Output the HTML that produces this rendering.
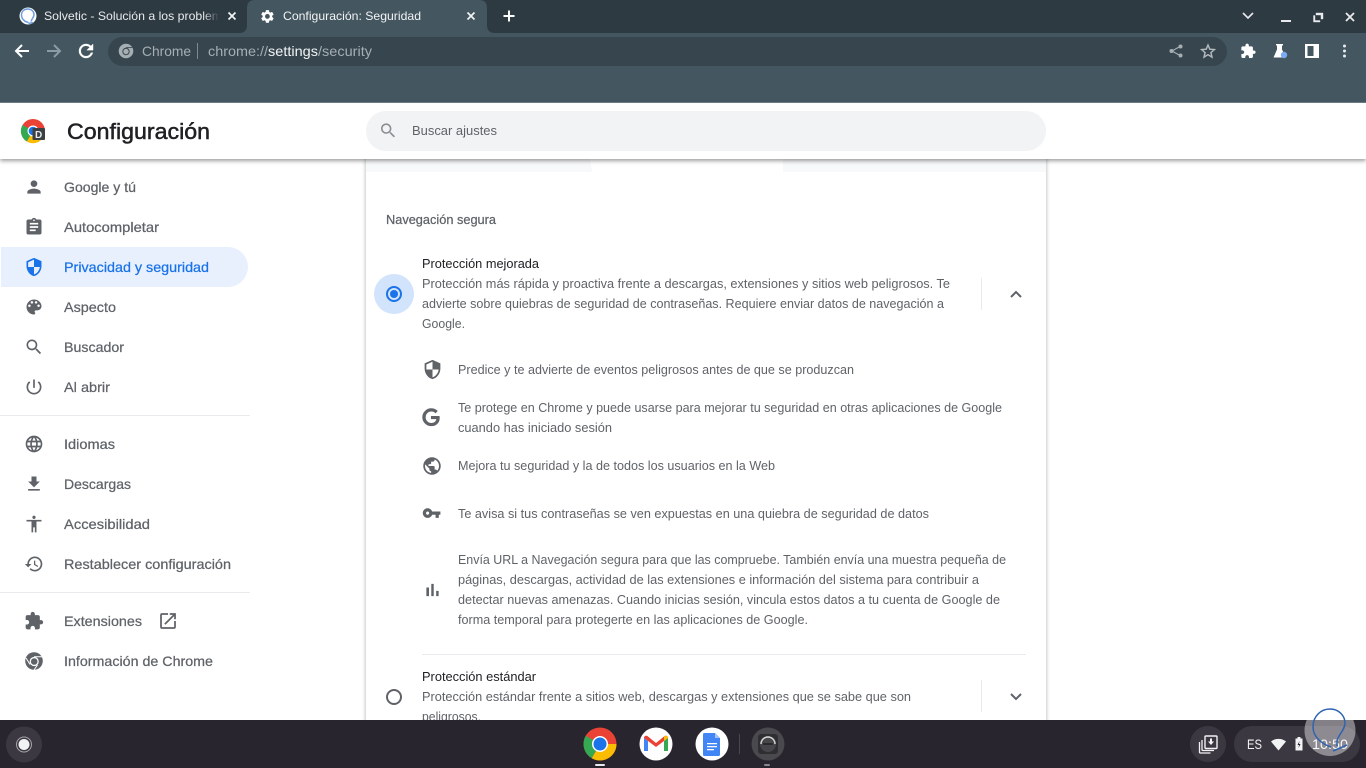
<!DOCTYPE html>
<html lang="es"><head><meta charset="utf-8"><title>Configuración: Seguridad</title>
<style>
html,body{margin:0;padding:0;width:1366px;height:768px;overflow:hidden;background:#fff}
.a{position:absolute}
svg{position:absolute;left:0;top:0}
text{font-family:"Liberation Sans",sans-serif;white-space:pre}
.nav{font-size:14px;fill:#5f6368;stroke:#5f6368;stroke-width:.25}
.b{font-size:13px;fill:#5f6368}
.t{font-size:13px;fill:#202124}
.i{fill:#5f6368}
</style></head><body>
<div class="a" style="left:366px;top:150px;width:680px;height:580px;background:#fff;box-shadow:0 0 3px 1px rgba(60,64,67,.28)"></div>
<div class="a" style="left:366px;top:159px;width:680px;height:13px;background:#f8f9fa;clip-path:polygon(0 0,224px 0,226px 100%,0 100%)"></div>
<div class="a" style="left:783px;top:159px;width:263px;height:13px;background:#f8f9fa"></div>
<div class="a" style="left:0;top:103px;width:1366px;height:56px;background:#fff;box-shadow:0 2px 4px rgba(0,0,0,.38)"></div>
<svg width="1366" height="768" viewBox="0 0 1366 768" xmlns="http://www.w3.org/2000/svg">
<defs><linearGradient id="fd" x1="0" x2="1" y1="0" y2="0"><stop offset="0" stop-color="#2e3a41" stop-opacity="0"/><stop offset="1" stop-color="#2e3a41"/></linearGradient></defs>
<!-- chrome frame -->
<rect width="1366" height="33" fill="#2e3a41"/>
<rect y="33" width="1366" height="69" fill="#44565f"/>
<rect y="102" width="1366" height="1" fill="#6b7b84"/>
<path d="M239 33q8 0 8-8V8q0-8 8-8h224q8 0 8 8v17q0 8 8 8z" fill="#44565f"/>
<rect x="108" y="37" width="1119" height="29" rx="14.5" fill="#37464e"/>
<!-- tab 1 -->
<circle cx="28" cy="16" r="8.500" fill="#fff"/>
<path d="M28.500 22.500C24 21.500 21.500 18.500 21.500 15C21.500 11 24.500 9 27.500 9C31.500 9 34 11.500 34 14.500C34 17.500 31.500 19 31 21.500M28.500 23.500L33 22.500" fill="none" stroke="#6f9fe0" stroke-width="1.500"/>
<svg x="0" y="0" width="219" height="33"><text x="44" y="20" font-size="12" fill="#e8eaed" textLength="178" lengthAdjust="spacingAndGlyphs">Solvetic - Solución a los problem</text></svg>
<rect x="203" y="8" width="16" height="18" fill="url(#fd)"/>
<path d="M228.500 12.500l7 7m0-7l-7 7" stroke="#f1f3f4" stroke-width="1.700" fill="none"/>
<!-- tab 2 -->
<g transform="translate(259.500 8.500) scale(.66)"><path fill="#fff" d="M19.140 12.940c.04-.3.06-.61.06-.94 0-.32-.02-.64-.07-.94l2.030-1.580c.18-.14.23-.41.12-.61l-1.920-3.320c-.12-.22-.37-.29-.59-.22l-2.390.96c-.5-.38-1.030-.7-1.620-.94l-.36-2.540c-.04-.24-.24-.41-.48-.41h-3.840c-.24 0-.43.17-.47.41l-.36 2.540c-.59.24-1.130.57-1.620.94l-2.390-.96c-.22-.08-.47 0-.59.22L2.740 8.870c-.12.21-.08.47.12.61l2.030 1.580c-.05.3-.09.63-.09.94s.02.64.07.94l-2.030 1.580c-.18.14-.23.41-.12.61l1.920 3.320c.12.22.37.29.59.22l2.390-.96c.5.38 1.030.7 1.620.94l.36 2.540c.05.24.24.41.48.41h3.840c.24 0 .44-.17.47-.41l.36-2.540c.59-.24 1.130-.56 1.620-.94l2.390.96c.22.08.47 0 .59-.22l1.920-3.320c.12-.22.07-.47-.12-.61l-2.010-1.580zM12 15.600c-1.980 0-3.600-1.620-3.600-3.600s1.620-3.600 3.600-3.600 3.600 1.620 3.600 3.600-1.620 3.600-3.600 3.600z"/></g>
<text x="283" y="20" font-size="12" fill="#f1f3f4" textLength="138" lengthAdjust="spacingAndGlyphs">Configuración: Seguridad</text>
<path d="M467.500 12.500l7 7m0-7l-7 7" stroke="#f1f3f4" stroke-width="1.700" fill="none"/>
<path d="M509 10.500v11M503.500 16h11" stroke="#fff" stroke-width="2" fill="none"/>
<!-- window controls -->
<path d="M1243 13l5 5 5-5" stroke="#e8eaed" stroke-width="1.600" fill="none"/>
<rect x="1281" y="20" width="10" height="2" fill="#e8eaed"/>
<path d="M1316 13h7v6h-2v-4h-5zM1313.500 15.500h1.500v5h5v1.500h-6.500z" fill="#e8eaed" stroke="#e8eaed" stroke-width=".4"/>
<path d="M1346 13l8 8m0-8l-8 8" stroke="#e8eaed" stroke-width="1.800" fill="none"/>
<!-- toolbar -->
<path d="M29 51H16.500M22 45l-6 6 6 6" stroke="#fff" stroke-width="2" fill="none"/>
<path d="M47 51h12.500M54 45l6 6-6 6" stroke="#8d9ba3" stroke-width="2" fill="none"/>
<g transform="translate(75.500 40.500) scale(.875)"><path fill="#fff" stroke="#fff" stroke-width=".5" d="M17.650 6.350C16.200 4.900 14.210 4 12 4c-4.420 0-7.990 3.580-7.990 8s3.570 8 7.990 8c3.730 0 6.840-2.550 7.730-6h-2.080c-.82 2.330-3.040 4-5.650 4-3.310 0-6-2.690-6-6s2.690-6 6-6c1.660 0 3.140.69 4.220 1.780L13 11h7V4l-2.350 2.350z"/></g>
<circle cx="126" cy="51" r="7.300" fill="#a5aeb3"/>
<circle cx="126" cy="51.500" r="3.700" fill="#37464e"/>
<circle cx="126" cy="51.500" r="2.700" fill="#a5aeb3"/>
<path d="M126 47.500h6.500" stroke="#37464e" stroke-width=".8"/>
<text x="142" y="56" font-size="14" fill="#a5aeb3" textLength="49" lengthAdjust="spacingAndGlyphs">Chrome</text>
<rect x="197" y="43" width="1" height="16" fill="#7d8a91"/>
<text x="208" y="56" font-size="14" fill="#a5aeb3" textLength="60" lengthAdjust="spacingAndGlyphs">chrome://</text>
<text x="268" y="56" font-size="14" fill="#f1f3f4" textLength="50" lengthAdjust="spacingAndGlyphs">settings</text>
<text x="318" y="56" font-size="14" fill="#a5aeb3" textLength="54" lengthAdjust="spacingAndGlyphs">/security</text>
<path d="M1180 46.500l-8 4.500 8 4.500" stroke="#a5aeb3" stroke-width="1.200" fill="none"/>
<circle cx="1180.500" cy="46.500" r="2" fill="#a5aeb3"/><circle cx="1171.500" cy="51" r="2" fill="#a5aeb3"/><circle cx="1180.500" cy="55.500" r="2" fill="#a5aeb3"/>
<path d="M1208 45l1.800 4.200 4.600.4-3.500 3 1.100 4.500-4-2.400-4 2.400 1.100-4.500-3.500-3 4.600-.4z" fill="none" stroke="#b4bcc0" stroke-width="1.400"/>
<g transform="translate(1240 43) scale(.68)"><path fill="#fff" d="M20.500 11H19V7c0-1.100-.9-2-2-2h-4V3.500C13 2.120 11.880 1 10.500 1S8 2.120 8 3.500V5H4c-1.100 0-1.990.9-1.990 2v3.800H3.500c1.490 0 2.700 1.210 2.700 2.700s-1.210 2.700-2.700 2.700H2V20c0 1.100.9 2 2 2h3.800v-1.500c0-1.490 1.210-2.700 2.700-2.700 1.490 0 2.700 1.210 2.700 2.700V22H17c1.100 0 2-.9 2-2v-4h1.500c1.380 0 2.500-1.120 2.500-2.500S21.880 11 20.500 11z"/></g>
<path d="M1276 44h7v1.500h-1v4l4 8h-12.500l3.500-8v-4h-1z" fill="#fff"/>
<circle cx="1284" cy="55" r="3.200" fill="#7baaf7"/>
<path d="M1305 44h14v14h-14zM1307.500 46v10h6v-10z" fill="#fff" fill-rule="evenodd"/>
<circle cx="1344.500" cy="46" r="1.500" fill="#e8eaed"/><circle cx="1344.500" cy="51" r="1.500" fill="#e8eaed"/><circle cx="1344.500" cy="56" r="1.500" fill="#e8eaed"/>
<!-- header -->
<circle cx="33" cy="131" r="12" fill="#ea4335"/>
<path d="M33 131l-6.200 10.500A12 12 0 0 1 22.600 125z" fill="#34a853"/>
<path d="M33 131h12a12 12 0 0 1-18.200 10.500z" fill="#fbbc04"/>
<circle cx="33" cy="131" r="5.500" fill="#fff"/><circle cx="33" cy="131" r="4.300" fill="#1a73e8"/>
<rect x="32.500" y="128" width="12.500" height="12" rx="1" fill="#3c4043"/>
<text x="35" y="138" font-size="10" font-weight="bold" fill="#e8eaed">D</text>
<text x="67" y="139" font-size="22" fill="#202124" stroke="#202124" stroke-width=".5" textLength="143" lengthAdjust="spacingAndGlyphs">Configuración</text>
<rect x="366" y="111" width="680" height="40" rx="20" fill="#f1f3f4"/>
<g transform="translate(378.600 121)  scale(.8)"><path fill="#8a8e92" d="M15.500 14h-.79l-.28-.27C15.410 12.590 16 11.110 16 9.500 16 5.910 13.090 3 9.500 3S3 5.910 3 9.500 5.910 16 9.500 16c1.610 0 3.090-.59 4.230-1.570l.27.28v.79l5 4.990L20.490 19l-4.990-5zm-6 0C7.010 14 5 11.990 5 9.500S7.010 5 9.500 5 14 7.010 14 9.500 11.990 14 9.500 14z"/></g>
<text x="412" y="135" font-size="13" fill="#5f6368" textLength="85" lengthAdjust="spacingAndGlyphs">Buscar ajustes</text>
<!-- sidebar -->
<path d="M1 247h227a20 20 0 0 1 0 40H1z" fill="#e8f0fe"/>
<rect x="0" y="415" width="250" height="1" fill="#e8eaed"/>
<rect x="0" y="592" width="250" height="1" fill="#e8eaed"/>
<g class="i">
<path transform="translate(24 177) scale(.833)" d="M12 12c2.210 0 4-1.790 4-4s-1.790-4-4-4-4 1.790-4 4 1.790 4 4 4zm0 2c-2.670 0-8 1.340-8 4v2h16v-2c0-2.660-5.330-4-8-4z"/>
<path transform="translate(24 217) scale(.833)" d="M19 3h-4.180C14.400 1.840 13.300 1 12 1c-1.300 0-2.400.84-2.820 2H5c-1.100 0-2 .9-2 2v14c0 1.100.9 2 2 2h14c1.100 0 2-.9 2-2V5c0-1.100-.9-2-2-2zm-7 0c.55 0 1 .45 1 1s-.45 1-1 1-1-.45-1-1 .45-1 1-1zm2 14H7v-2h7v2zm3-4H7v-2h10v2zm0-4H7V7h10v2z"/>
<path transform="translate(24 257) scale(.833)" fill="#1a73e8" d="M12 1L3 5v6c0 5.550 3.840 10.740 9 12 5.160-1.260 9-6.450 9-12V5l-9-4zm0 10.990h7c-.53 4.120-3.280 7.790-7 8.940V12H5V6.300l7-3.110v8.800z"/>
<path transform="translate(24 297) scale(.833)" d="M12 3c-4.970 0-9 4.030-9 9s4.030 9 9 9c.83 0 1.500-.67 1.500-1.500 0-.39-.15-.74-.39-1.010-.23-.26-.38-.61-.38-.99 0-.83.67-1.500 1.500-1.500H16c2.760 0 5-2.240 5-5 0-4.420-4.030-8-9-8zm-5.500 9c-.83 0-1.500-.67-1.500-1.500S5.670 9 6.500 9 8 9.670 8 10.500 7.330 12 6.500 12zm3-4C8.670 8 8 7.330 8 6.500S8.670 5 9.500 5s1.500.67 1.500 1.500S10.330 8 9.500 8zm5 0c-.83 0-1.500-.67-1.500-1.500S13.670 5 14.500 5s1.500.67 1.500 1.500S15.330 8 14.500 8zm3 4c-.83 0-1.500-.67-1.500-1.500S16.670 9 17.500 9s1.500.67 1.500 1.500-.67 1.500-1.500 1.500z"/>
<path transform="translate(24 337) scale(.833)" d="M15.500 14h-.79l-.28-.27C15.410 12.590 16 11.110 16 9.500 16 5.910 13.090 3 9.500 3S3 5.910 3 9.500 5.910 16 9.500 16c1.610 0 3.090-.59 4.230-1.570l.27.28v.79l5 4.990L20.490 19l-4.990-5zm-6 0C7.010 14 5 11.990 5 9.500S7.010 5 9.500 5 14 7.010 14 9.500 11.990 14 9.500 14z"/>
<path transform="translate(24 377) scale(.833)" d="M13 3h-2v10h2V3zm4.830 2.170l-1.420 1.420C17.990 7.860 19 9.810 19 12c0 3.870-3.130 7-7 7s-7-3.130-7-7c0-2.190 1.010-4.140 2.580-5.420L6.170 5.170C4.230 6.820 3 9.260 3 12c0 4.970 4.030 9 9 9s9-4.030 9-9c0-2.740-1.230-5.180-3.170-6.830z"/>
<path transform="translate(24 434) scale(.833)" d="M11.990 2C6.470 2 2 6.480 2 12s4.470 10 9.990 10C17.520 22 22 17.520 22 12S17.520 2 11.990 2zm6.930 6h-2.950c-.32-1.250-.78-2.450-1.380-3.560 1.840.63 3.370 1.910 4.330 3.560zM12 4.040c.83 1.200 1.480 2.530 1.910 3.960h-3.820c.43-1.430 1.080-2.760 1.910-3.960zM4.260 14C4.100 13.360 4 12.690 4 12s.1-1.360.26-2h3.380c-.08.66-.14 1.320-.14 2 0 .68.06 1.340.14 2H4.260zm.82 2h2.950c.32 1.250.78 2.450 1.380 3.560-1.840-.63-3.370-1.900-4.330-3.560zm2.950-8H5.080c.96-1.660 2.490-2.930 4.330-3.560C8.810 5.550 8.350 6.750 8.030 8zM12 19.960c-.83-1.200-1.480-2.530-1.910-3.960h3.820c-.43 1.430-1.080 2.760-1.910 3.960zM14.340 14H9.660c-.09-.66-.16-1.320-.16-2 0-.68.07-1.350.16-2h4.680c.09.65.16 1.320.16 2 0 .68-.07 1.340-.16 2zm.25 5.560c.6-1.110 1.060-2.310 1.380-3.560h2.950c-.96 1.650-2.490 2.930-4.330 3.560zM16.360 14c.08-.66.14-1.320.14-2 0-.68-.06-1.340-.14-2h3.380c.16.64.26 1.310.26 2s-.1 1.360-.26 2h-3.380z"/>
<path transform="translate(24 474) scale(.833)" d="M19 9h-4V3H9v6H5l7 7 7-7zM5 18v2h14v-2H5z"/>
<path transform="translate(24 514) scale(.833)" d="M12 2c1.100 0 2 .9 2 2s-.9 2-2 2-2-.9-2-2 .9-2 2-2zm9 7h-6v13h-2v-6h-2v6H9V9H3V7h18v2z"/>
<path transform="translate(24 554) scale(.833)" d="M13 3c-4.970 0-9 4.030-9 9H1l3.890 3.890.07.14L9 12H6c0-3.870 3.130-7 7-7s7 3.130 7 7-3.130 7-7 7c-1.930 0-3.680-.79-4.940-2.060l-1.420 1.420C8.270 19.990 10.510 21 13 21c4.970 0 9-4.030 9-9s-4.030-9-9-9zm-1 5v5l4.280 2.540.72-1.210-3.500-2.080V8H12z"/>
<path transform="translate(24 611) scale(.833)" d="M20.500 11H19V7c0-1.100-.9-2-2-2h-4V3.500C13 2.120 11.880 1 10.500 1S8 2.120 8 3.500V5H4c-1.100 0-1.990.9-1.990 2v3.800H3.500c1.490 0 2.700 1.210 2.700 2.700s-1.210 2.700-2.700 2.700H2V20c0 1.100.9 2 2 2h3.800v-1.500c0-1.490 1.210-2.700 2.700-2.700 1.490 0 2.700 1.210 2.700 2.700V22H17c1.100 0 2-.9 2-2v-4h1.500c1.380 0 2.500-1.120 2.500-2.500S21.880 11 20.500 11z"/>
<path transform="translate(157.500 610.500) scale(.875)" d="M19 19H5V5h7V3H5c-1.110 0-2 .9-2 2v14c0 1.100.89 2 2 2h14c1.100 0 2-.9 2-2v-7h-2v7zM14 3v2h3.590l-9.830 9.830 1.410 1.410L19 6.410V10h2V3h-7z"/>
<circle cx="34" cy="661" r="8.800"/>
</g>
<circle cx="34.200" cy="661.500" r="4.600" fill="#fff"/>
<circle cx="34.200" cy="661.500" r="3.300" fill="#5f6368"/>
<path d="M34 656.800h8M30 664.500l-4-6.500M37.500 665l-3.500 5" stroke="#fff" stroke-width="1" fill="none"/>
<text class="nav" x="64" y="192" textLength="72" lengthAdjust="spacingAndGlyphs">Google y tú</text>
<text class="nav" x="64" y="232" textLength="95" lengthAdjust="spacingAndGlyphs">Autocompletar</text>
<text class="nav" x="64" y="272" style="fill:#1a73e8;stroke:#1a73e8" textLength="145" lengthAdjust="spacingAndGlyphs">Privacidad y seguridad</text>
<text class="nav" x="64" y="312" textLength="52" lengthAdjust="spacingAndGlyphs">Aspecto</text>
<text class="nav" x="64" y="352" textLength="60" lengthAdjust="spacingAndGlyphs">Buscador</text>
<text class="nav" x="64" y="392" textLength="46" lengthAdjust="spacingAndGlyphs">Al abrir</text>
<text class="nav" x="64" y="449" textLength="51" lengthAdjust="spacingAndGlyphs">Idiomas</text>
<text class="nav" x="64" y="489" textLength="67" lengthAdjust="spacingAndGlyphs">Descargas</text>
<text class="nav" x="64" y="529" textLength="86" lengthAdjust="spacingAndGlyphs">Accesibilidad</text>
<text class="nav" x="64" y="569" textLength="167" lengthAdjust="spacingAndGlyphs">Restablecer configuración</text>
<text class="nav" x="64" y="626" textLength="78" lengthAdjust="spacingAndGlyphs">Extensiones</text>
<text class="nav" x="64" y="666" textLength="149" lengthAdjust="spacingAndGlyphs">Información de Chrome</text>
<!-- main -->
<text x="386" y="224" font-size="13" fill="#5f6368" stroke="#5f6368" stroke-width=".25" textLength="110" lengthAdjust="spacingAndGlyphs">Navegación segura</text>
<circle cx="394" cy="294" r="20" fill="#d2e3fc"/>
<circle cx="394" cy="294" r="7" fill="none" stroke="#1a73e8" stroke-width="2"/>
<circle cx="394" cy="294" r="4" fill="#1a73e8"/>
<text class="t" x="422" y="268" textLength="117" lengthAdjust="spacingAndGlyphs">Protección mejorada</text>
<text class="b" x="422" y="288" textLength="528" lengthAdjust="spacingAndGlyphs">Protección más rápida y proactiva frente a descargas, extensiones y sitios web peligrosos. Te</text>
<text class="b" x="422" y="308" textLength="522" lengthAdjust="spacingAndGlyphs">advierte sobre quiebras de seguridad de contraseñas. Requiere enviar datos de navegación a</text>
<text class="b" x="422" y="328" textLength="43" lengthAdjust="spacingAndGlyphs">Google.</text>
<rect x="981" y="278" width="1" height="32" fill="#e8eaed"/>
<path d="M1011 297l5-5 5 5" fill="none" stroke="#5f6368" stroke-width="2"/>
<g class="i">
<path transform="translate(422 359) scale(.875)" d="M12 1L3 5v6c0 5.550 3.840 10.740 9 12 5.160-1.260 9-6.450 9-12V5l-9-4zm0 10.990h7c-.53 4.120-3.280 7.790-7 8.940V12H5V6.300l7-3.110v8.800z"/>
<path transform="translate(421 407) scale(.85)" stroke="#5f6368" stroke-width="1" d="M21.350 11.100h-9.170v2.730h6.510c-.33 3.810-3.500 5.440-6.500 5.440C8.360 19.270 5 16.250 5 12c0-4.100 3.200-7.270 7.200-7.270 3.090 0 4.900 1.970 4.900 1.970L19 4.720S16.560 2 12.100 2C6.420 2 2.030 6.800 2.030 12c0 5.050 4.130 10 10.220 10 5.350 0 9.250-3.670 9.250-9.090 0-1.150-.15-1.810-.15-1.810z"/>
<path transform="translate(421.500 455.500) scale(.875)" d="M12 2C6.480 2 2 6.480 2 12s4.480 10 10 10 10-4.480 10-10S17.520 2 12 2zm-1 17.930c-3.950-.49-7-3.850-7-7.930 0-.62.08-1.210.21-1.790L9 15v1c0 1.100.9 2 2 2v1.930zm6.900-2.540c-.26-.81-1-1.390-1.900-1.390h-1v-3c0-.55-.45-1-1-1H8v-2h2c.55 0 1-.45 1-1V7h2c1.100 0 2-.9 2-2v-.41c2.930 1.190 5 4.060 5 7.410 0 2.080-.8 3.970-2.100 5.390z"/>
<path transform="translate(422 503.500) scale(.8)" d="M12.650 10C11.830 7.670 9.610 6 7 6c-3.310 0-6 2.690-6 6s2.690 6 6 6c2.610 0 4.830-1.670 5.650-4H17v4h4v-4h2v-4H12.650zM7 14c-1.100 0-2-.9-2-2s.9-2 2-2 2 .9 2 2-.9 2-2 2z"/>
<path transform="translate(422 579.500) scale(.875)" d="M5 9.200h3V19H5zM10.600 5h2.800v14h-2.800zm5.600 8H19v6h-2.800z"/>
</g>
<text class="b" x="458" y="374" textLength="396" lengthAdjust="spacingAndGlyphs">Predice y te advierte de eventos peligrosos antes de que se produzcan</text>
<text class="b" x="458" y="412" textLength="544" lengthAdjust="spacingAndGlyphs">Te protege en Chrome y puede usarse para mejorar tu seguridad en otras aplicaciones de Google</text>
<text class="b" x="458" y="432" textLength="154" lengthAdjust="spacingAndGlyphs">cuando has iniciado sesión</text>
<text class="b" x="458" y="470" textLength="317" lengthAdjust="spacingAndGlyphs">Mejora tu seguridad y la de todos los usuarios en la Web</text>
<text class="b" x="458" y="518" textLength="471" lengthAdjust="spacingAndGlyphs">Te avisa si tus contraseñas se ven expuestas en una quiebra de seguridad de datos</text>
<text class="b" x="458" y="564" textLength="548" lengthAdjust="spacingAndGlyphs">Envía URL a Navegación segura para que las compruebe. También envía una muestra pequeña de</text>
<text class="b" x="458" y="584" textLength="521" lengthAdjust="spacingAndGlyphs">páginas, descargas, actividad de las extensiones e información del sistema para contribuir a</text>
<text class="b" x="458" y="604" textLength="542" lengthAdjust="spacingAndGlyphs">detectar nuevas amenazas. Cuando inicias sesión, vincula estos datos a tu cuenta de Google de</text>
<text class="b" x="458" y="624" textLength="350" lengthAdjust="spacingAndGlyphs">forma temporal para protegerte en las aplicaciones de Google.</text>
<rect x="422" y="654" width="604" height="1" fill="#e8eaed"/>
<circle cx="394" cy="697" r="7" fill="none" stroke="#5f6368" stroke-width="2"/>
<text class="t" x="422" y="681" textLength="114" lengthAdjust="spacingAndGlyphs">Protección estándar</text>
<text class="b" x="422" y="701" textLength="489" lengthAdjust="spacingAndGlyphs">Protección estándar frente a sitios web, descargas y extensiones que se sabe que son</text>
<text class="b" x="422" y="721" textLength="59" lengthAdjust="spacingAndGlyphs">peligrosos.</text>
<rect x="981" y="680" width="1" height="32" fill="#e8eaed"/>
<path d="M1011 694l5 5 5-5" fill="none" stroke="#5f6368" stroke-width="2"/>
<!-- shelf -->
<rect y="720" width="1366" height="48" fill="#29252f"/>
<circle cx="24" cy="744.500" r="18" fill="#3c3842"/>
<circle cx="24" cy="744.500" r="7.500" fill="none" stroke="#a8a6ac" stroke-width="1"/>
<circle cx="24" cy="744.500" r="5.500" fill="#f1f3f4"/>
<!-- chrome app -->
<circle cx="600" cy="744" r="16.500" fill="#ea4335"/>
<path d="M600 744l-8.250 14.290A16.500 16.500 0 0 1 585.700 735.750z" fill="#34a853"/>
<path d="M600 744h16.500a16.500 16.500 0 0 1-24.750 14.290z" fill="#fbbc04"/>
<circle cx="600" cy="744" r="8" fill="#fff"/><circle cx="600" cy="744" r="6.500" fill="#1a73e8"/>
<rect x="595" y="764" width="10" height="2" rx="1" fill="#e8eaed"/>
<!-- gmail -->
<circle cx="656" cy="744" r="16.500" fill="#fff"/>
<path d="M644 738v13h4v-10z" fill="#4285f4"/>
<path d="M664 741v10h4v-13z" fill="#34a853"/>
<path d="M644 738c0-2 2.500-3 4-1.500l8 6.500 8-6.500c1.500-1.500 4-.5 4 1.500l-4 3-8 6-8-6z" fill="#ea4335"/>
<path d="M664 736.500c1.500-1.500 4-.5 4 1.500l-4 3z" fill="#fbbc04"/>
<!-- docs -->
<circle cx="712" cy="744" r="16.500" fill="#fff"/>
<path d="M704.500 733h10.500l5 5v16.500a1.500 1.500 0 0 1-1.500 1.500h-14a1.500 1.500 0 0 1-1.500-1.500V734.500a1.500 1.500 0 0 1 1.500-1.500z" fill="#4285f4"/>
<path d="M715 733l5 5h-5z" fill="#a1c2fa"/>
<path d="M707 743h10v1.300h-10zM707 746h10v1.300h-10zM707 749h7v1.300h-7z" fill="#fff"/>
<rect x="739" y="734" width="1" height="20" fill="#4a4650"/>
<!-- teamviewer -->
<circle cx="768" cy="744" r="16.500" fill="#4a4a4e"/>
<rect x="758" y="734" width="20" height="20" rx="3" fill="#2f2f33"/>
<circle cx="768" cy="744" r="8" fill="#47474b"/>
<path d="M761 744a7 7 0 0 1 14 0" fill="none" stroke="#d8d8d8" stroke-width="1.400"/>
<path d="M763 744h10" stroke="#222" stroke-width="1.500"/>
<rect x="764" y="764" width="6" height="2" rx="1" fill="#8a8790"/>
<!-- tray -->
<circle cx="1208" cy="744" r="18" fill="#3c3842"/>
<rect x="1234" y="726" width="126" height="36" rx="18" fill="#3c3842"/>
<rect x="1205" y="736" width="12" height="12.500" rx="1" fill="none" stroke="#f1f3f4" stroke-width="1.400"/>
<path d="M1210 738.500h2v3h2l-3 3.500-3-3.500h2z" fill="#f1f3f4"/>
<path d="M1202 740v9.500a1 1 0 0 0 1 1h11M1199.500 742v10a1 1 0 0 0 1 1h10" fill="none" stroke="#f1f3f4" stroke-width="1.300"/>
<text x="1247" y="749" font-size="14" fill="#f1f3f4" textLength="15" lengthAdjust="spacingAndGlyphs">ES</text>
<path d="M1271 741.500a12 12 0 0 1 15 0l-7.500 9z" fill="#f1f3f4"/>
<path d="M1297.500 737h3v1.500h2v12h-7v-12h2z" fill="#f1f3f4"/>
<path d="M1299.500 741l-2 4h1.500l-.5 3 2-4h-1.500z" fill="#29252f"/>
<text x="1312" y="749" font-size="14" fill="#f1f3f4" textLength="36" lengthAdjust="spacingAndGlyphs">10:50</text>
<!-- watermark -->
<circle cx="1330" cy="730.500" r="25.500" fill="#fff" fill-opacity=".42"/>
<path d="M1331 747C1322 744 1313 737 1313 727C1313 716 1321 709 1330 709C1339 709 1345 716 1345 723C1345 730 1338 735 1337 741C1337 743 1337 745 1337 746M1333 751L1347 745" fill="none" stroke="#2f63b0" stroke-width="1.500"/>
</svg>
</body></html>
